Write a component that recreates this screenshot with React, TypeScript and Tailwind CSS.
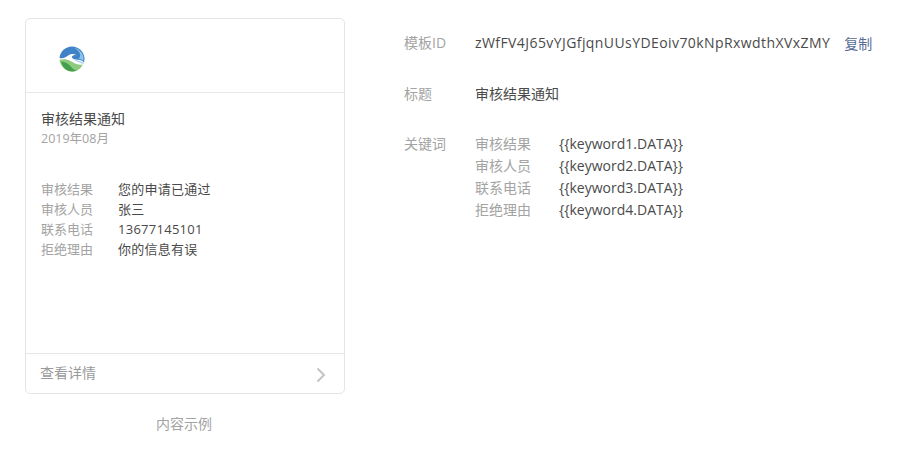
import React from 'react'

const FONT = "font-['Open_Sans','Noto_Sans_CJK_SC',sans-serif]"

const sample = [
    ['审核结果', '您的申请已通过'],
    ['审核人员', '张三'],
    ['联系电话', '13677145101'],
    ['拒绝理由', '你的信息有误'],
]

const keywords = [
    ['审核结果', '{{keyword1.DATA}}'],
    ['审核人员', '{{keyword2.DATA}}'],
    ['联系电话', '{{keyword3.DATA}}'],
    ['拒绝理由', '{{keyword4.DATA}}'],
]

function Logo() {
    return (
        <svg width="28" height="28" viewBox="0 0 28 28" className="block">
            {/* blue wave */}
            <path d="M1.500 13C2 6.500 7.500 1.500 14 1.500c6.500 0 12 5 12.500 11.500.1 1.500-.1 3-.5 4.500-1.500-1.800-3.500-2.400-6-2.700-3-.4-5.500-.8-6-2.300-.5-1.600 2-3 4.500-2.200-2.500-1.800-5.500-1.800-8 0C8.500 12 5 14 1.500 13z" fill="#3f82c8" />
            <path d="M16 3c5.500 1 9.500 5.500 9.500 10.500 0 .8-.1 1.500-.2 2.200-1.300-1-2.800-1.500-4.800-1.900 3-2.300 2.500-7.800-4.500-10.800z" fill="#8fc3ea" />
            <path d="M14 13.500c3 1.500 7 1.500 11.800 4.500l-.5 1.200C21 17 17 16 14 13.500z" fill="#a9d3ef" />
            {/* green leaf */}
            <path d="M1.500 14.800c4-1 8-.5 11 1.300 3.500 2.200 7 4.500 12.300 3.400C22.800 24 18.500 26.500 14 26.500 7.500 26.500 2.200 21.300 1.500 14.800z" fill="#8ccb7e" />
            <path d="M3 16.500c4 .2 7.500 2 9.500 4.800 1.700 2.300 3.500 3.800 6.500 4.300-1.500.6-3.200.9-5 .9-5.500 0-9.700-4.500-11-10z" fill="#45a04e" />
        </svg>
    )
}

export default function App() {
    return (
        <div className={`${FONT} flex h-[453px] w-[902px] items-start bg-white pl-[25px] pt-[18px]`}>
            <div className="w-[320px] shrink-0">
                <div className="flex h-[376px] flex-col rounded-[5px] border border-[#e4e5e7]">
                    <div className="flex h-[74px] items-center border-b border-[#e7e7eb] pl-[32px] pt-[7px]">
                        <Logo />
                    </div>
                    <div className="flex-1 px-[15px] pt-[16px]">
                        <h4 className="text-[14px] leading-[20px] text-[#4a4a4a]">审核结果通知</h4>
                        <p className="text-[12.500px] leading-[20px] text-[#a3a3a3]">2019年08月</p>
                        <div className="mt-[30px] flex flex-col">
                            {sample.map(([label, value]) => (
                                <div key={label} className="flex text-[13px] leading-[20px]">
                                    <span className="w-[77px] text-[#a3a3a3]">{label}</span>
                                    <span className="text-[#4a4a4a] tracking-[0.27px]">{value}</span>
                                </div>
                            ))}
                        </div>
                    </div>
                    <div className="flex h-[40px] items-center justify-between border-t border-[#e7e7eb] pl-[14px] pr-[18px] text-[14px] text-[#9a9a9a]">
                        <span className="-mt-[2px]">查看详情</span>
                        <svg width="10" height="16" viewBox="0 0 10 16" fill="none" stroke="#c4c4c4" strokeWidth="2" className="mt-[2px]">
                            <path d="M1.500 1.500 8 8l-6.500 6.500" />
                        </svg>
                    </div>
                </div>
                <p className="mt-[20px] pr-[2px] text-center text-[14px] leading-[20px] text-[#a3a3a3]">内容示例</p>
            </div>
            <div className="ml-[59px] flex flex-col pt-[14px]">
                <div className="flex h-[22px] items-center text-[14px]">
                    <span className="w-[71px] -mt-[2px] text-[#a3a3a3]">模板ID</span>
                    <span className="-mt-[2px] tracking-[0.42px] text-[#4a4a4a]">zWfFV4J65vYJGfjqnUUsYDEoiv70kNpRxwdthXVxZMY</span>
                    <a className="ml-[14px] mt-[1px] text-[#576b95]">复制</a>
                </div>
                <div className="mt-[28px] flex h-[22px] items-center text-[14px]">
                    <span className="w-[71px] text-[#a3a3a3]">标题</span>
                    <span className="text-[#4a4a4a]">审核结果通知</span>
                </div>
                <div className="mt-[29px] flex text-[14px] leading-[22px]">
                    <span className="w-[71px] text-[#a3a3a3]">关键词</span>
                    <div className="flex flex-col">
                        {keywords.map(([label, value]) => (
                            <div key={label} className="flex">
                                <span className="w-[84px] text-[#a3a3a3]">{label}</span>
                                <span className="text-[#4a4a4a]">{value}</span>
                            </div>
                        ))}
                    </div>
                </div>
            </div>
        </div>
    )
}
